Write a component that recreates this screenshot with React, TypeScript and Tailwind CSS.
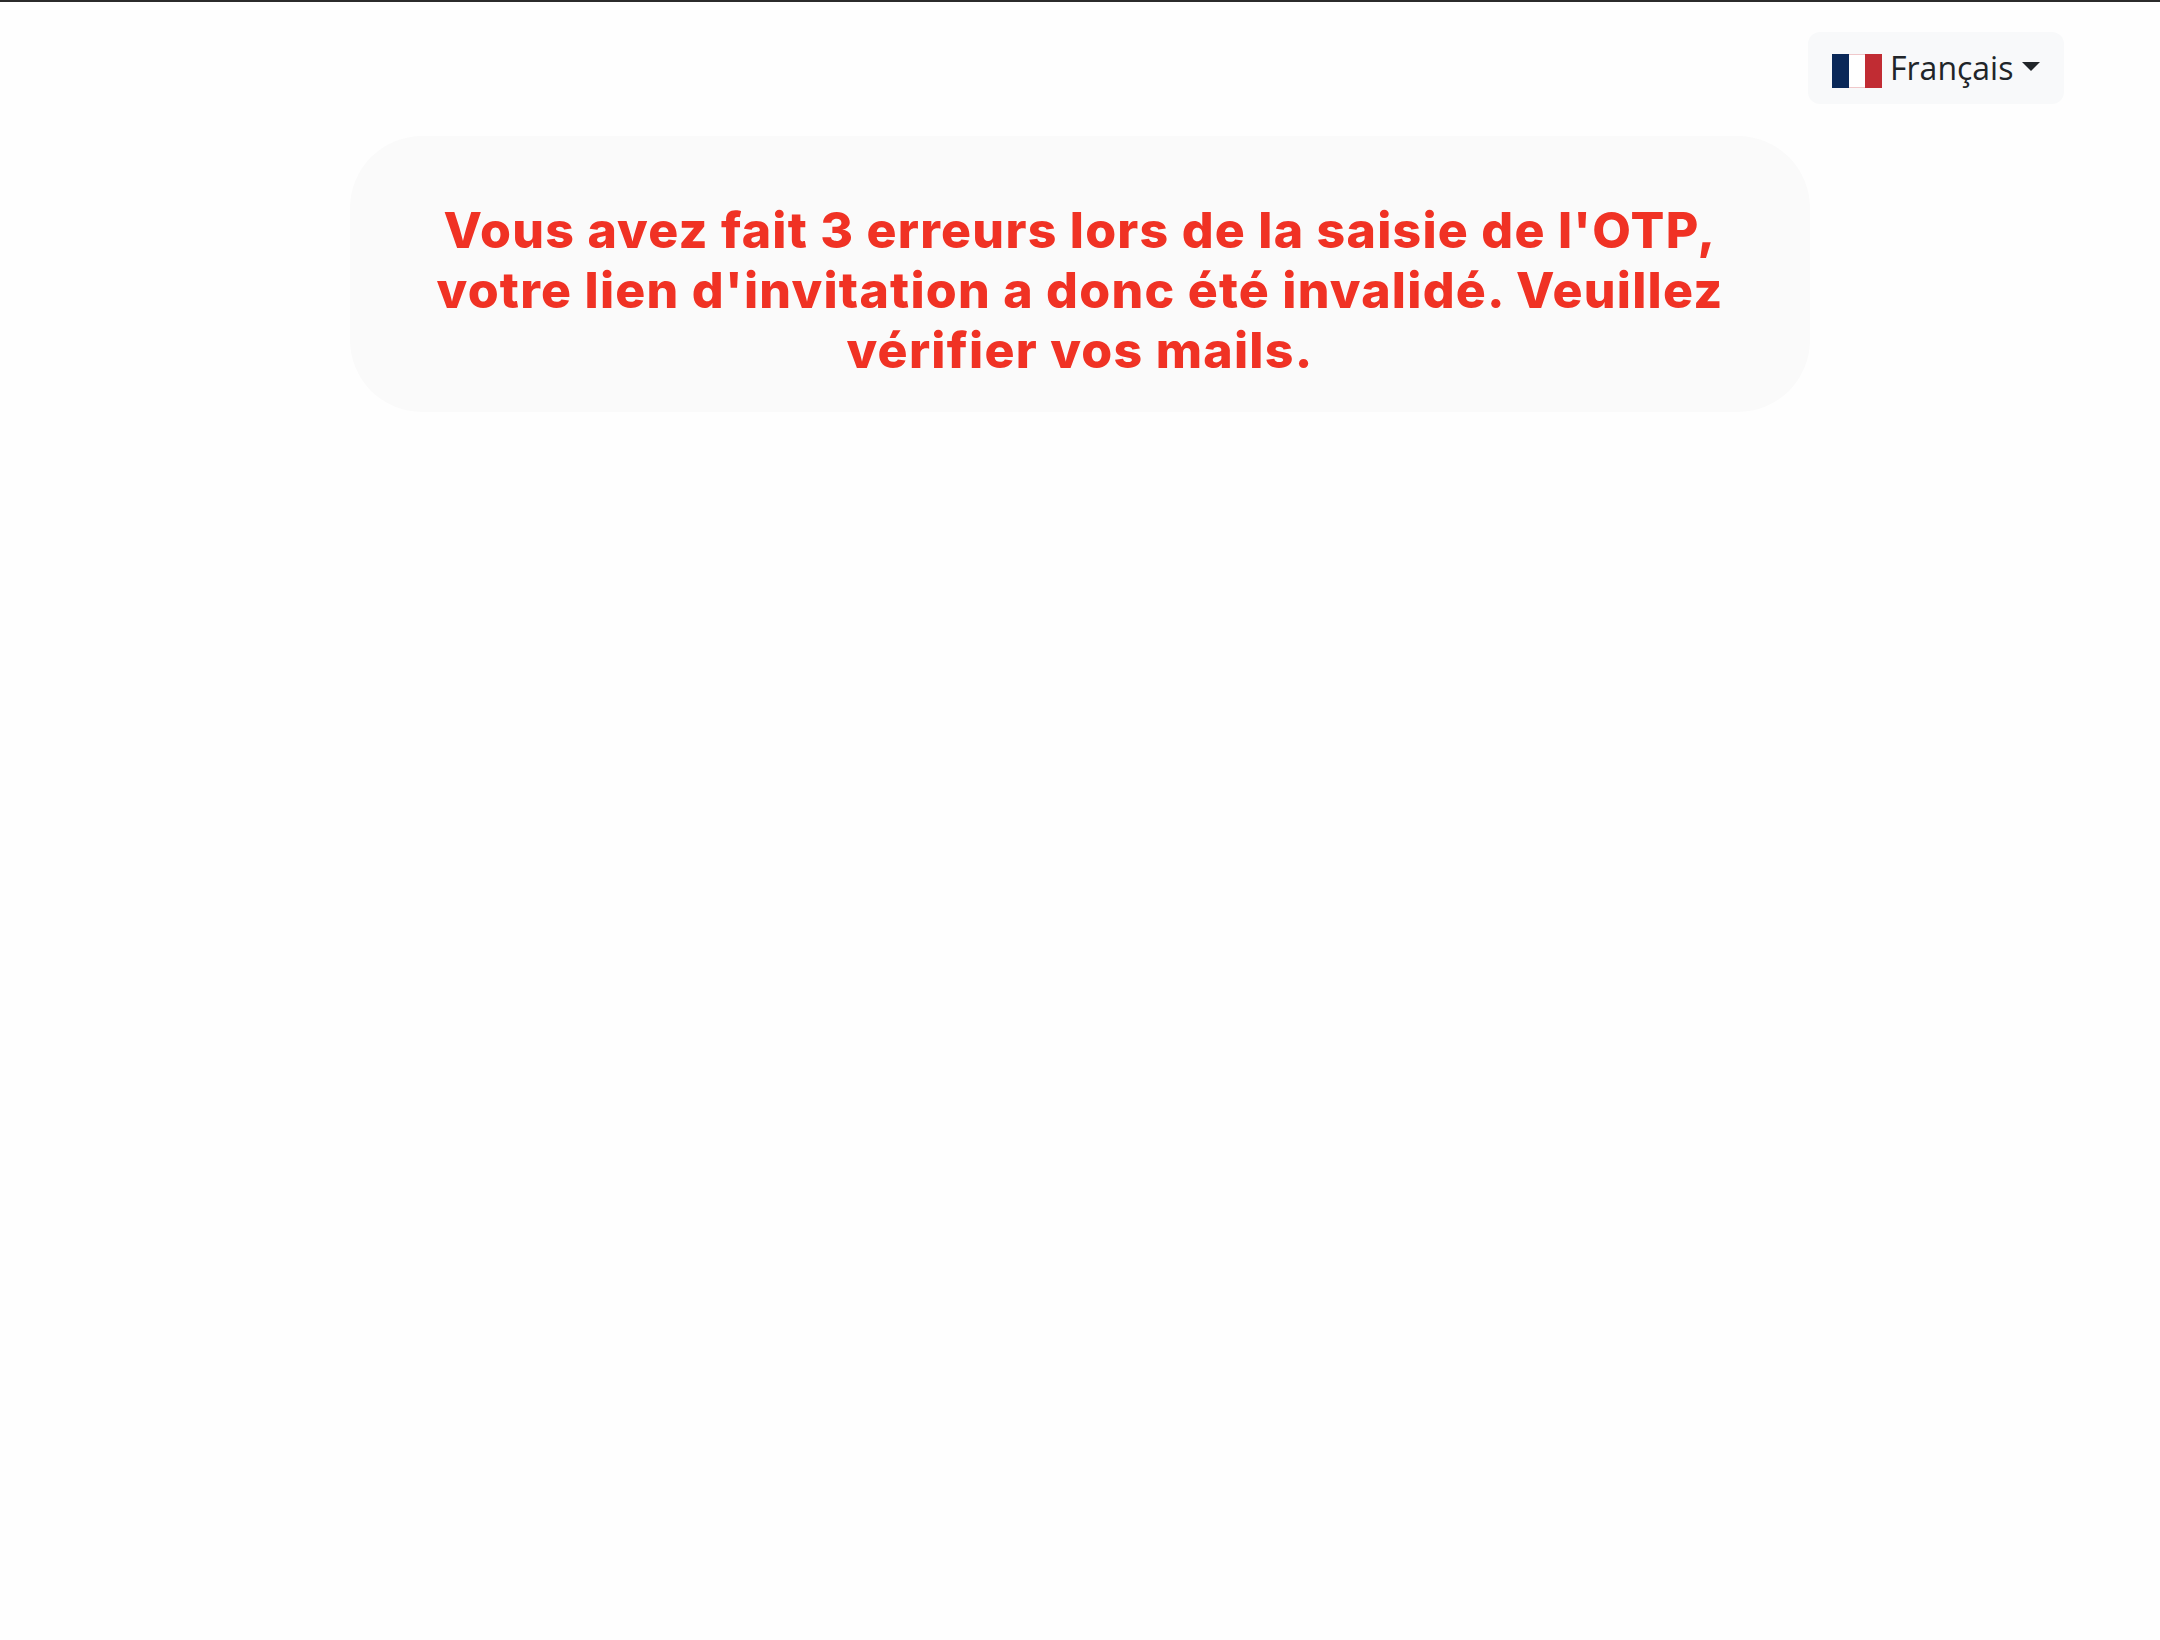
const App = () => {
  return (
    <div className="min-h-[1640px] w-full bg-[#fefefe] border-t-2 border-[#2b2b2b]">
      {/* Language picker */}
      <div className="flex justify-end pt-[30px] pr-[96px]">
        <button className="flex items-center h-[72px] w-[256px] pl-[24px] rounded-[12px] bg-[#f8f9fa] text-[#212529] text-[32px] font-['Open_Sans',sans-serif]">
          <svg width="50" height="34" viewBox="0 0 50 34" className="shrink-0 mt-[6px]">
            <rect width="17" height="34" fill="#0a2858" />
            <rect x="17" width="16" height="34" fill="#ffffff" />
            <rect x="17" width="16" height="1" fill="#f0c8ca" />
            <rect x="17" y="33" width="16" height="1" fill="#f0c8ca" />
            <rect x="33" width="17" height="34" fill="#c12c33" />
          </svg>
          <span className="ml-[8px]">Français</span>
          <span className="ml-[9px] mb-[4px] w-0 h-0 border-x-[9.6px] border-x-transparent border-t-[9.6px] border-t-[#212529]"></span>
        </button>
      </div>

      {/* Error card */}
      <div className="flex justify-center mt-[32px]">
        <div className="w-[1460px] h-[276px] pt-[64px] rounded-[72px] bg-[#fafafa]">
          <h1 className="mx-auto w-[1320px] text-center text-[50px] leading-[60px] font-extrabold tracking-[1.25px] text-[#f03224] font-['Inter',sans-serif]">
            Vous avez fait 3 erreurs lors de la saisie de l'OTP, votre lien d'invitation a donc été invalidé. Veuillez vérifier vos mails.
          </h1>
        </div>
      </div>
    </div>
  );
};

export default App;
